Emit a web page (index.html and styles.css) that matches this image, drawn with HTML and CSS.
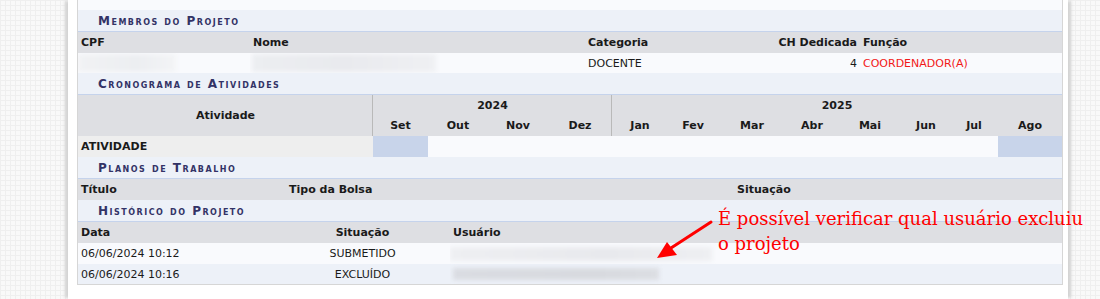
FILE: index.html
```html
<!doctype html>
<html lang="pt-BR">
<head>
    <meta charset="UTF-8">
    <title>Projeto - Histórico</title>
    <link rel="stylesheet" href="styles.css">
</head>
<body>
    <div class="sheet">
        <div class="box">
            <div class="tail"></div>

            <div class="sec">Membros do Projeto</div>
            <table class="grid">
                <colgroup>
                    <col style="width:172px"><col style="width:335px"><col style="width:115px"><col style="width:160px"><col style="width:202px">
                </colgroup>
                <tr>
                    <th>CPF</th>
                    <th>Nome</th>
                    <th>Categoria</th>
                    <th class="right">CH Dedicada</th>
                    <th>Função</th>
                </tr>
                <tr class="odd short">
                    <td><span class="blur blur--cpf"></span></td>
                    <td><span class="blur blur--nome"></span></td>
                    <td>DOCENTE</td>
                    <td class="right">4</td>
                    <td class="red">COORDENADOR(A)</td>
                </tr>
            </table>

            <div class="sec">Cronograma de Atividades</div>
            <table class="grid crono">
                <colgroup>
                    <col style="width:295px"><col style="width:55px"><col style="width:60px"><col style="width:60px"><col style="width:64px"><col style="width:56px"><col style="width:50px"><col style="width:68px"><col style="width:52px"><col style="width:64px"><col style="width:48px"><col style="width:48px"><col style="width:64px">
                </colgroup>
                <tr class="top">
                    <th rowspan="2" class="center line">Atividade</th>
                    <th colspan="4" class="center line">2024</th>
                    <th colspan="8" class="center">2025</th>
                </tr>
                <tr class="months">
                    <th class="center">Set</th>
                    <th class="center">Out</th>
                    <th class="center">Nov</th>
                    <th class="center line">Dez</th>
                    <th class="center">Jan</th>
                    <th class="center">Fev</th>
                    <th class="center">Mar</th>
                    <th class="center">Abr</th>
                    <th class="center">Mai</th>
                    <th class="center">Jun</th>
                    <th class="center">Jul</th>
                    <th class="center">Ago</th>
                </tr>
                <tr class="odd">
                    <td class="label">ATIVIDADE</td>
                    <td class="on"></td>
                    <td></td><td></td><td></td><td></td><td></td><td></td><td></td><td></td><td></td><td></td>
                    <td class="on"></td>
                </tr>
            </table>

            <div class="sec">Planos de Trabalho</div>
            <table class="grid">
                <colgroup>
                    <col style="width:208px"><col style="width:448px"><col style="width:328px">
                </colgroup>
                <tr>
                    <th>Título</th>
                    <th>Tipo da Bolsa</th>
                    <th>Situação</th>
                </tr>
            </table>

            <div class="sec">Histórico do Projeto</div>
            <table class="grid">
                <colgroup>
                    <col style="width:197px"><col style="width:175px"><col style="width:612px">
                </colgroup>
                <tr>
                    <th>Data</th>
                    <th class="center">Situação</th>
                    <th>Usuário</th>
                </tr>
                <tr class="odd">
                    <td>06/06/2024 10:12</td>
                    <td class="center">SUBMETIDO</td>
                    <td><span class="blur blur--user1"></span></td>
                </tr>
                <tr class="even short">
                    <td>06/06/2024 10:16</td>
                    <td class="center">EXCLUÍDO</td>
                    <td><span class="blur blur--user2"></span></td>
                </tr>
            </table>
        </div>
    </div>

    <p class="note">É possível verificar qual usuário excluiu<br>o projeto</p>
    <svg class="arrow" width="70" height="50" viewBox="650 215 70 50">
        <line x1="711" y1="222" x2="671" y2="248" stroke="#f00" stroke-width="3" stroke-linecap="round"/>
        <polygon points="657,258 667,242 677,255" fill="#f00"/>
    </svg>
</body>
</html>
```

FILE: styles.css
```css
html, body {
    margin: 0;
    height: 299px;
    overflow: hidden;
}
body {
    position: relative;
    font-family: 'DejaVu Sans', sans-serif;
    font-size: 11px;
    color: #1a1a1a;
    background-color: #f9f9f9;
    background-image:
        linear-gradient(90deg, #efefef 1px, transparent 1px),
        linear-gradient(#efefef 1px, transparent 1px);
    background-size: 5px 5px;
}
.sheet {
    margin-left: 68px;
    width: 1000px;
    height: 299px;
    padding-left: 9px;
    box-sizing: border-box;
    background: #ffffff;
    box-shadow: -4px 0 3px -1px #d2d2d2, 4px 0 3px -1px #d2d2d2;
}
.box {
    width: 986px;
    box-sizing: border-box;
    border: 1px solid #d6d6d6;
    border-top: none;
}
.tail {
    height: 10px;
    background: #f9fafd;
}
.sec {
    height: 21px;
    line-height: 22px;
    padding-left: 20px;
    background: #edf1f8;
    border-bottom: 1px solid #c5d3ec;
    color: #333366;
    font-size: 12px;
    font-weight: bold;
    font-variant: small-caps;
    letter-spacing: 1.5px;
}
.grid {
    width: 984px;
    table-layout: fixed;
    border-collapse: collapse;
}
.grid th, .grid td {
    height: 21px;
    padding: 0 3px;
    text-align: left;
    white-space: nowrap;
    overflow: hidden;
}
.grid tr.short td {
    height: 20px;
}
.grid th {
    background: #dedfe3;
    font-weight: bold;
}
.grid .center {
    text-align: center;
}
.grid .right {
    text-align: right;
}
.grid .line {
    box-shadow: inset -1px 0 #b9b9b9;
}
.grid tr.odd td {
    background: #f9fafd;
}
.grid tr.even td {
    background: #edf1f8;
}
.red {
    color: #f21818;
}
.crono tr.top th {
    height: 20px;
}
.crono tr.months th {
    height: 21px;
}
.crono tr.odd td.label {
    background: #eeeeee;
    font-weight: bold;
}
.crono tr.odd td.on {
    background: #c8d4ea;
}
.blur {
    display: block;
    filter: blur(2px);
}
.blur--cpf {
    width: 98px;
    height: 18px;
    margin-left: -3px;
    background: linear-gradient(90deg, #f1f2f4, #eceef1 60%, #f3f4f6);
}
.blur--nome {
    width: 184px;
    height: 18px;
    margin-left: -1px;
    background: linear-gradient(90deg, #eceef1, #e9eaee 50%, #eff0f3);
}
.blur--user1 {
    width: 262px;
    height: 14px;
    margin-left: -3px;
    background: linear-gradient(90deg, #eeeff2, #e8e9ed 60%, #eeeff2);
}
.blur--user2 {
    width: 206px;
    height: 12px;
    background: linear-gradient(90deg, #dadce2, #d8dadf 70%, #dcdee3);
}
.note {
    position: absolute;
    left: 718px;
    top: 206px;
    margin: 0;
    font-family: 'DejaVu Serif', serif;
    font-size: 18px;
    line-height: 25px;
    color: #ff0000;
}
.arrow {
    position: absolute;
    left: 650px;
    top: 215px;
}
```
